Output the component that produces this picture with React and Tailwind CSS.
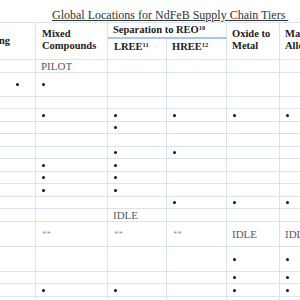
import React from "react";

const COLS = "grid grid-cols-[36px_72px_59px_60px_53px_60px]";
const CELL = "border-r border-b border-[#d9e3f3] flex items-center overflow-hidden";

function Dot() {
  return <span className="block w-[3px] h-[3px] rounded-full bg-[#111]" />;
}

const rows = [
  { h: "h-[13px]", c: [null, "PILOT", null, null, null, null] },
  { h: "h-[24px]", c: ["dot0", "dot", null, null, null, null] },
  { h: "h-[12px]", c: [null, null, null, null, null, null] },
  { h: "h-[13px]", c: [null, "dot", "dot", "dot", "dot", "dot"] },
  { h: "h-[12px]", c: [null, null, "dot", null, null, null] },
  { h: "h-[13px]", c: [null, null, null, null, null, null] },
  { h: "h-[12px]", c: [null, null, "dot", "dot", null, null] },
  { h: "h-[13px]", c: [null, "dot", "dot", null, null, null] },
  { h: "h-[12px]", c: [null, "dot", "dot", null, null, null] },
  { h: "h-[13px]", c: [null, "dot", "dot", null, null, null] },
  { h: "h-[12px]", c: [null, null, null, "dot", "dot", "dot"] },
  { h: "h-[13px]", c: [null, null, "IDLE", null, null, null] },
  { h: "h-[25px]", c: [null, "**", "**", "**", "IDLE", "IDLE"] },
  { h: "h-[25px]", c: [null, null, null, null, "dot", "dot"] },
  { h: "h-[12px]", c: [null, null, null, null, "dot", "dot"] },
  { h: "h-[13px]", c: [null, "dot", "dot", null, "dot", "dot"] },
  { h: "h-[13px]", c: [null, null, null, null, null, null] },
];

function Content({ v }) {
  if (v === "dot0")
    return (
      <div className="pl-[16px]">
        <Dot />
      </div>
    );
  if (v === "dot")
    return (
      <div className="pl-[6px]">
        <Dot />
      </div>
    );
  if (v === "**")
    return <span className="pl-[6px] text-[9px] leading-[10px] text-[#9a9a9a]">**</span>;
  if (v)
    return <span className="pl-[5px] text-[11px] leading-[12px] text-[#5a5a5a] whitespace-nowrap">{v}</span>;
  return null;
}

export default function App() {
  return (
    <div className="w-[300px] h-[300px] overflow-hidden bg-white font-['Liberation_Serif',serif]">
      <div className="h-[22px] pl-[52px] pt-[2px]">
        <span className="text-[12px] leading-[14px] text-[#333] underline whitespace-nowrap">
          {"Global Locations for NdFeB Supply Chain Tiers\u00a0"}
        </span>
      </div>
      <div className="w-[340px] border-t border-[#d9e3f3]">
        <div className={`${COLS} grid-rows-[16px_21px] text-[10.5px] leading-[12px] font-bold text-[#1c1c1c]`}>
          <div className="row-span-2 border-r border-b border-[#d9e3f3] flex items-center justify-end pr-[25px] overflow-hidden whitespace-nowrap">
            Mining
          </div>
          <div className="row-span-2 border-r border-b border-[#d9e3f3] pl-[6px] pt-[5px]">Mixed Compounds</div>
          <div className="col-span-2 border-r border-[#d9e3f3] border-b-2 border-b-[#a9c6ea] pl-[5px] pt-[1px] whitespace-nowrap">
            Separation to REO<sup className="text-[6.5px]">10</sup>
          </div>
          <div className="row-span-2 border-r border-b border-[#d9e3f3] pl-[5px] pt-[5px]">Oxide to Metal</div>
          <div className="row-span-2 border-r border-b border-[#d9e3f3] pl-[5px] pt-[5px]">Master Alloys</div>
          <div className="border-r border-b border-[#d9e3f3] pl-[6px] pt-[2px] whitespace-nowrap">
            LREE<sup className="text-[6.5px]">11</sup>
          </div>
          <div className="border-r border-b border-[#d9e3f3] pl-[5px] pt-[2px] whitespace-nowrap">
            HREE<sup className="text-[6.5px]">12</sup>
          </div>
        </div>
        {rows.map((r, i) => (
          <div key={i} className={`${COLS} ${r.h}`}>
            {r.c.map((v, j) => (
              <div key={j} className={CELL}>
                <Content v={v} />
              </div>
            ))}
          </div>
        ))}
      </div>
    </div>
  );
}
